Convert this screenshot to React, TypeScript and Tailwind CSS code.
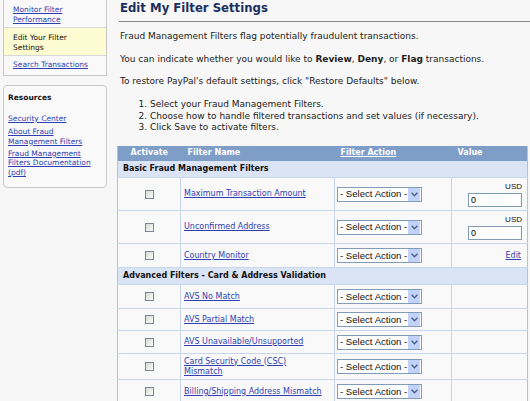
import React from "react";

const LINK = "text-[#2f3fb0] underline";

function Check() {
  return (
    <div className="mx-auto w-[9px] h-[9px] border border-[#7b8794] bg-[linear-gradient(135deg,#d9d9d3,#fbfbf9)]" />
  );
}

function Sel() {
  return (
    <div className="flex items-center w-[85px] h-[15px] border border-[#7f9db9] bg-white">
      <span className="flex-1 pl-[2px] font-['Liberation_Sans',sans-serif] text-[9.6px] leading-none text-[#111] whitespace-nowrap">
        - Select Action -
      </span>
      <span className="w-[12px] h-[13px] mr-[1px] bg-[#c1d3fb] flex items-center justify-center">
        <svg width="7" height="5" viewBox="0 0 7 5">
          <path d="M0.6 0.8 L3.5 3.8 L6.4 0.8" fill="none" stroke="#4d6185" strokeWidth="1.4" />
        </svg>
      </span>
    </div>
  );
}

function Amount() {
  return (
    <div className="flex flex-col items-end pr-[5px]">
      <span className="leading-[10px] text-[8px] font-['Liberation_Sans',sans-serif] text-[#111]">USD</span>
      <div className="mt-[1px] w-[54px] h-[14px] border border-[#7f9db9] bg-white pl-[2px] text-[9px] leading-[12px] font-['Liberation_Sans',sans-serif] text-black">
        0
      </div>
    </div>
  );
}

type Row = { name: React.ReactNode; h: string; value?: React.ReactNode };

function FilterRow({ name, h, value }: Row) {
  return (
    <tr className={`${h} border-b border-[#c9d6ec]`}>
      <td className="border-r border-[#c9d6ec] align-middle">
        <Check />
      </td>
      <td className="border-r border-[#c9d6ec] align-middle pl-[3px] leading-[10px]">
        <a className={LINK}>{name}</a>
      </td>
      <td className="border-r border-[#c9d6ec] align-middle pl-[2px]">
        <Sel />
      </td>
      <td className="align-middle">{value}</td>
    </tr>
  );
}

function Section({ title }: { title: string }) {
  return (
    <tr className="h-[17px] bg-[#dbe4f4] border-b border-[#c9d6ec]">
      <td colSpan={4} className="pl-[5px] font-bold text-[#111] whitespace-nowrap align-middle">
        {title}
      </td>
    </tr>
  );
}

export default function App() {
  return (
    <div className="w-[530px] h-[401px] overflow-hidden bg-[#f7f7f7] flex font-['DejaVu_Sans',sans-serif] text-[#222]">
      {/* Sidebar */}
      <aside className="w-[110px] shrink-0 pl-[3px] text-[7.5px]">
        <div className="w-[104px] border border-t-0 border-[#c8c8c8] bg-[#f9f9f9]">
          <div className="pl-[9px] pt-[5px] pb-[3px] leading-[9.5px] border-b border-[#d8d8d8]">
            <a className={LINK}>
              Monitor Filter
              <br />
              Performance
            </a>
          </div>
          <div className="pl-[9px] pt-[5px] pb-[3px] leading-[9.5px] bg-[#fdfbd2] border-b border-[#d8d8d8] text-[#111]">
            Edit Your Filter
            <br />
            Settings
          </div>
          <div className="pl-[9px] pt-[4px] pb-[5px] leading-[9.5px]">
            <a className={LINK}>Search Transactions</a>
          </div>
        </div>
        <div className="mt-[9px] w-[104px] h-[103px] border border-[#c8c8c8] rounded-[4px] bg-[#f9f9f9] pl-[4px] pt-[7px]">
          <div className="font-bold text-[#111] leading-[10px]">Resources</div>
          <div className="mt-[11px] leading-[10px]">
            <a className={LINK}>Security Center</a>
          </div>
          <div className="mt-[3px] leading-[10px]">
            <a className={LINK}>
              About Fraud
              <br />
              Management Filters
            </a>
          </div>
          <div className="mt-[2px] leading-[9.5px]">
            <a className={LINK}>
              Fraud Management
              <br />
              Filters Documentation
              <br />
              (pdf)
            </a>
          </div>
        </div>
      </aside>

      {/* Main */}
      <main className="flex-1 pl-[7px] min-w-0">
        <div className="pl-[3px]">
          <h1 className="text-[11.7px] font-bold leading-[16px] text-[#1b2f5e] whitespace-nowrap">Edit My Filter Settings</h1>
        </div>
        <div className="ml-[2px] mt-[5px] border-t-[1.5px] border-[#8a8a8a]" />
        <div className="pl-[3px] text-[9px] leading-[12px] whitespace-nowrap">
          <p className="mt-[8px]">Fraud Management Filters flag potentially fraudulent transactions.</p>
          <p className="mt-[11px]">
            You can indicate whether you would like to <b>Review</b>, <b>Deny</b>, or <b>Flag</b> transactions.
          </p>
          <p className="mt-[10px]">To restore PayPal's default settings, click "Restore Defaults" below.</p>
          <ol className="mt-[12px] leading-[11.5px]">
            <li className="flex">
              <span className="w-[30px] text-right pr-[3px]">1.</span>
              <span>Select your Fraud Management Filters.</span>
            </li>
            <li className="flex">
              <span className="w-[30px] text-right pr-[3px]">2.</span>
              <span>Choose how to handle filtered transactions and set values (if necessary).</span>
            </li>
            <li className="flex">
              <span className="w-[30px] text-right pr-[3px]">3.</span>
              <span>Click Save to activate filters.</span>
            </li>
          </ol>
        </div>

        <table className="mt-[12px] w-[410px] table-fixed border-collapse border-l border-r border-[#b3c2d9] text-[8px] bg-[#f9f9f9]">
          <colgroup>
            <col className="w-[63px]" />
            <col className="w-[154px]" />
            <col className="w-[117px]" />
            <col className="w-[76px]" />
          </colgroup>
          <thead>
            <tr className="h-[15px] bg-[#7e9dc7] text-white font-bold">
              <th className="text-center font-bold">Activate</th>
              <th className="text-left pl-[7px] font-bold">Filter Name</th>
              <th className="text-left pl-[6px] font-bold">
                <span className="underline">Filter Action</span>
              </th>
              <th className="text-left pl-[6px] font-bold">Value</th>
            </tr>
          </thead>
          <tbody>
            <Section title="Basic Fraud Management Filters" />
            <FilterRow h="h-[33px]" name="Maximum Transaction Amount" value={<Amount />} />
            <FilterRow h="h-[33px]" name="Unconfirmed Address" value={<Amount />} />
            <FilterRow
              h="h-[24px]"
              name="Country Monitor"
              value={
                <div className="text-right pr-[6px]">
                  <a className={LINK}>Edit</a>
                </div>
              }
            />
            <Section title="Advanced Filters - Card & Address Validation" />
            <FilterRow h="h-[24px]" name="AVS No Match" />
            <FilterRow h="h-[22px]" name="AVS Partial Match" />
            <FilterRow h="h-[23px]" name="AVS Unavailable/Unsupported" />
            <FilterRow
              h="h-[26px]"
              name={
                <>
                  Card Security Code (CSC)
                  <br />
                  Mismatch
                </>
              }
            />
            <FilterRow h="h-[24px]" name="Billing/Shipping Address Mismatch" />
          </tbody>
        </table>
      </main>
    </div>
  );
}
